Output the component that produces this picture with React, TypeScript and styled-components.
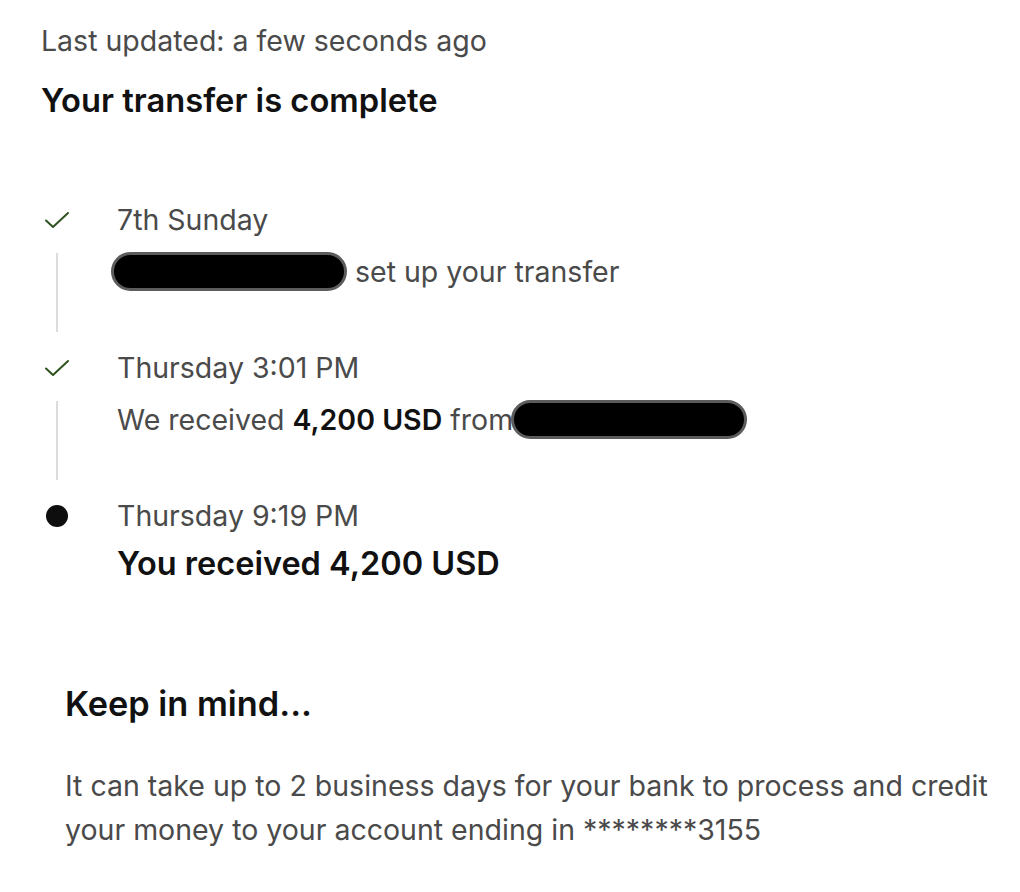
import React from "react";
import styled, { createGlobalStyle } from "styled-components";

const Global = createGlobalStyle`
  html, body { margin: 0; padding: 0; background: #ffffff; }
  body { font-family: Inter, "Noto Sans", sans-serif; -webkit-font-smoothing: antialiased; }
`;

const Page = styled.main`
  width: 1020px;
  padding: 22px 0 0 41px;
  box-sizing: border-box;
`;

const Updated = styled.div`
  font-size: 28.5px;
  line-height: 38px;
  color: #4a4a4a;
`;

const Title = styled.h1`
  margin: 20px 0 0;
  font-size: 32.7px;
  line-height: 40px;
  font-weight: 600;
  color: #111111;
`;

const Timeline = styled.ol`
  list-style: none;
  margin: 80px 0 0;
  padding: 0;
  display: flex;
  flex-direction: column;
  gap: 16px;
`;

const Item = styled.li`
  display: grid;
  grid-template-columns: 76px 1fr;
  grid-template-rows: 40px auto;
  row-gap: 11px;
`;

const Marker = styled.div`
  grid-column: 1;
  grid-row: 1;
  width: 32px;
  display: flex;
  align-items: center;
  justify-content: center;
`;

const Rail = styled.div`
  grid-column: 1;
  grid-row: 2;
  width: 32px;
  display: flex;
  justify-content: center;
  padding-top: 2px;
`;

const RailLine = styled.div<{ $len: number }>`
  width: 2px;
  height: ${(p) => p.$len}px;
  background: #dcdcdc;
`;

const Dot = styled.div`
  width: 22px;
  height: 22px;
  border-radius: 50%;
  background: #0e0e0e;
`;

const DateText = styled.div`
  grid-column: 2;
  grid-row: 1;
  font-size: 28.5px;
  line-height: 40px;
  color: #4a4a4a;
`;

const Desc = styled.div<{ $strong?: boolean }>`
  grid-column: 2;
  grid-row: 2;
  align-self: start;
  display: flex;
  align-items: center;
  height: 40px;
  margin-top: ${(p) => (p.$strong ? "-4px" : "0")};
  font-size: ${(p) => (p.$strong ? "32.5px" : "28.5px")};
  font-weight: ${(p) => (p.$strong ? 600 : 400)};
  color: ${(p) => (p.$strong ? "#111111" : "#4a4a4a")};
  white-space: pre;
`;

const Bold = styled.b`
  font-weight: 600;
  color: #111111;
`;

const Redacted = styled.span<{ $gapL?: number; $gapR?: number }>`
  display: inline-block;
  flex: none;
  width: 236px;
  height: 39px;
  box-sizing: border-box;
  border-radius: 20px;
  background: #000000;
  border: 3.5px solid #5c5c5c;
  margin-left: ${(p) => p.$gapL ?? 0}px;
  margin-right: ${(p) => p.$gapR ?? 0}px;
`;

const Notice = styled.section`
  margin: 99px 0 0 24px;
`;

const NoticeTitle = styled.h2`
  margin: 0;
  font-size: 34.3px;
  line-height: 44px;
  font-weight: 600;
  color: #111111;
`;

const NoticeBody = styled.p`
  margin: 38px 0 0;
  max-width: 945px;
  font-size: 28.5px;
  line-height: 44px;
  color: #4a4a4a;
`;

const Check = () => (
  <svg width="26" height="20" viewBox="0 0 26 20" fill="none">
    <path d="M2 10.5 L9 17 L24 3" stroke="#2f5320" strokeWidth="2" strokeLinecap="round" strokeLinejoin="round" />
  </svg>
);

export default function App() {
  return (
    <>
      <Global />
      <Page>
        <Updated>Last updated: a few seconds ago</Updated>
        <Title>Your transfer is complete</Title>
        <Timeline>
          <Item>
            <Marker><Check /></Marker>
            <DateText>7th Sunday</DateText>
            <Rail><RailLine $len={79} /></Rail>
            <Desc>
              <Redacted $gapL={-6} $gapR={8} />set up your transfer
            </Desc>
          </Item>
          <Item>
            <Marker><Check /></Marker>
            <DateText>Thursday 3:01 PM</DateText>
            <Rail><RailLine $len={79} /></Rail>
            <Desc>
              We received <Bold>4,200 USD</Bold> from<Redacted $gapL={-2} />
            </Desc>
          </Item>
          <Item>
            <Marker><Dot /></Marker>
            <DateText>Thursday 9:19 PM</DateText>
            <Desc $strong>You received 4,200 USD</Desc>
          </Item>
        </Timeline>
        <Notice>
          <NoticeTitle>Keep in mind...</NoticeTitle>
          <NoticeBody>
            It can take up to 2 business days for your bank to process and credit your money to your account ending in ********3155
          </NoticeBody>
        </Notice>
      </Page>
    </>
  );
}
